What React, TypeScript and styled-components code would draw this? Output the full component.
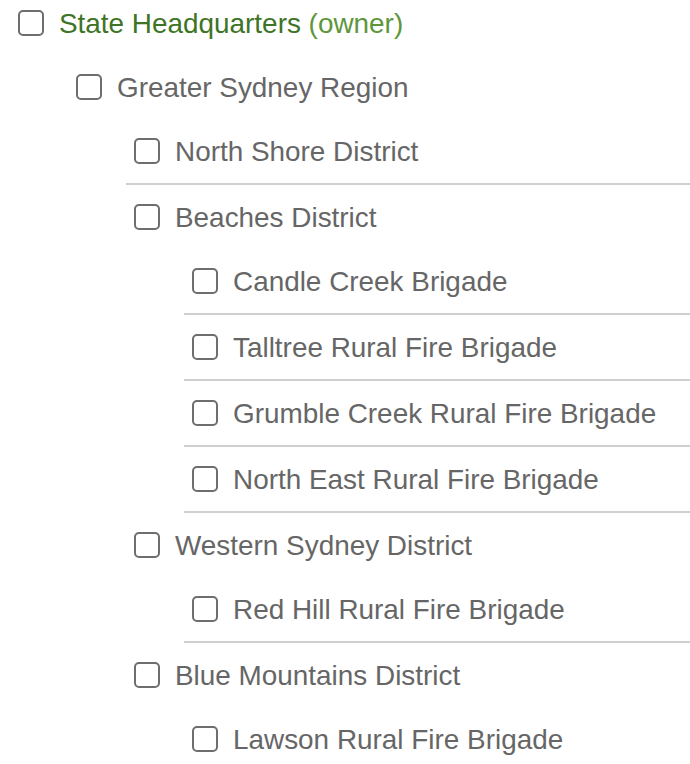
import React from "react";
import styled, { createGlobalStyle } from "styled-components";

const GlobalStyle = createGlobalStyle`
  html, body {
    margin: 0;
    padding: 0;
    background: #ffffff;
    overflow: hidden;
  }
  body {
    font-family: "Liberation Sans", Arial, Helvetica, sans-serif;
  }
`;

type TreeNode = {
  label: string;
  owner?: boolean;
  children?: TreeNode[];
};

const data: TreeNode[] = [
  {
    label: "State Headquarters",
    owner: true,
    children: [
      {
        label: "Greater Sydney Region",
        children: [
          { label: "North Shore District" },
          {
            label: "Beaches District",
            children: [
              { label: "Candle Creek Brigade" },
              { label: "Talltree Rural Fire Brigade" },
              { label: "Grumble Creek Rural Fire Brigade" },
              { label: "North East Rural Fire Brigade" },
            ],
          },
          {
            label: "Western Sydney District",
            children: [{ label: "Red Hill Rural Fire Brigade" }],
          },
          {
            label: "Blue Mountains District",
            children: [{ label: "Lawson Rural Fire Brigade" }],
          },
        ],
      },
    ],
  },
];

const Page = styled.div`
  padding-left: 10px;
  margin-top: -9px;
  width: 680px;
`;

const List = styled.ul<{ $nested?: boolean }>`
  list-style: none;
  margin: 0;
  padding: 0 0 0 ${(p) => (p.$nested ? "58px" : "0")};
`;

const Item = styled.li`
  margin: 0;
  padding: 0;
`;

const Row = styled.label<{ $leaf?: boolean }>`
  display: flex;
  align-items: center;
  height: 64px;
  padding-left: 8px;
  box-sizing: content-box;
  border-bottom: ${(p) => (p.$leaf ? "2px solid #cfcfcf" : "none")};
  cursor: pointer;
`;

const Box = styled.span`
  flex: none;
  width: 22px;
  height: 22px;
  border: 2px solid #6e6e6e;
  border-radius: 5px;
  background: #ffffff;
  margin-right: 15px;
`;

const Label = styled.span<{ $owner?: boolean }>`
  font-size: 27.9px;
  line-height: 32px;
  padding-top: 2px;
  color: ${(p) => (p.$owner ? "#3e7425" : "#666666")};
  white-space: nowrap;
`;

const Owner = styled.span`
  color: #5e963b;
`;

function Node({ node }: { node: TreeNode }) {
  const leaf = !node.children || node.children.length === 0;
  return (
    <Item>
      <Row $leaf={leaf}>
        <Box />
        <Label $owner={node.owner}>
          {node.label}
          {node.owner && <Owner> (owner)</Owner>}
        </Label>
      </Row>
      {!leaf && (
        <List $nested>
          {node.children!.map((c) => (
            <Node key={c.label} node={c} />
          ))}
        </List>
      )}
    </Item>
  );
}

export default function App() {
  return (
    <>
      <GlobalStyle />
      <Page>
        <List>
          {data.map((n) => (
            <Node key={n.label} node={n} />
          ))}
        </List>
      </Page>
    </>
  );
}
